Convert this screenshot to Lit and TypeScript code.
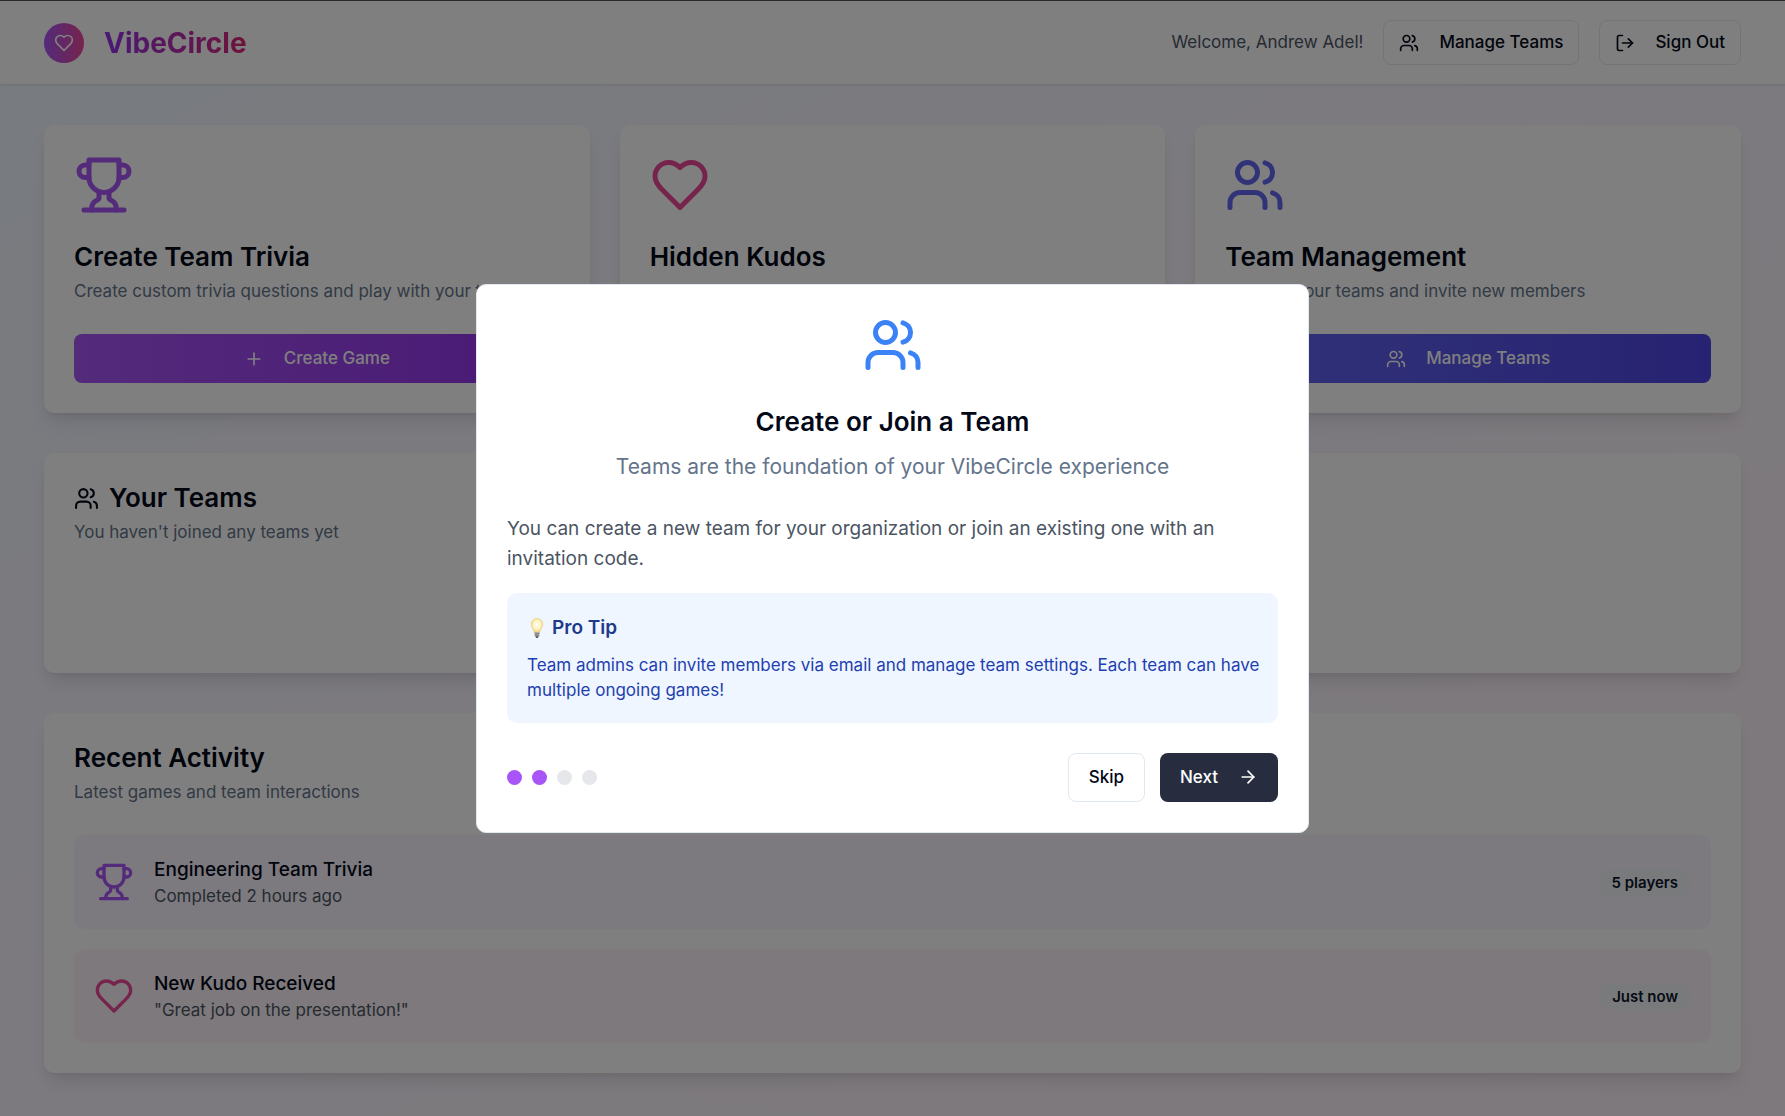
import { LitElement, html, css, svg } from "lit";
import { customElement, property } from "lit/decorators.js";

const glyphs = {
  users: svg`<path d="M16 21v-2a4 4 0 0 0-4-4H6a4 4 0 0 0-4 4v2"/><circle cx="9" cy="7" r="4"/><path d="M22 21v-2a4 4 0 0 0-3-3.87"/><path d="M16 3.13a4 4 0 0 1 0 7.75"/>`,
  heart: svg`<path d="M19 14c1.49-1.46 3-3.21 3-5.5A5.5 5.5 0 0 0 16.5 3c-1.76 0-3 .5-4.5 2-1.5-1.5-2.74-2-4.5-2A5.5 5.5 0 0 0 2 8.5c0 2.3 1.5 4.05 3 5.5l7 7Z"/>`,
  trophy: svg`<path d="M6 9H4.5a2.5 2.5 0 0 1 0-5H6"/><path d="M18 9h1.5a2.5 2.5 0 0 0 0-5H18"/><path d="M4 22h16"/><path d="M10 14.66V17c0 .55-.47.98-.97 1.21C7.85 18.75 7 20.24 7 22"/><path d="M14 14.66V17c0 .55.47.98.97 1.21C16.15 18.75 17 20.24 17 22"/><path d="M18 2H6v7a6 6 0 0 0 12 0V2Z"/>`,
  plus: svg`<path d="M5 12h14"/><path d="M12 5v14"/>`,
  logout: svg`<path d="M9 21H5a2 2 0 0 1-2-2V5a2 2 0 0 1 2-2h4"/><path d="m16 17 5-5-5-5"/><path d="M21 12H9"/>`,
  arrow: svg`<path d="M5 12h14"/><path d="m12 5 7 7-7 7"/>`,
};

type GlyphName = keyof typeof glyphs;

@customElement("line-icon")
class LineIcon extends LitElement {
  @property() name: GlyphName = "users";

  static styles = css`
    :host {
      display: block;
      flex: none;
      width: 20px;
      height: 20px;
    }
    svg {
      display: block;
      width: 100%;
      height: 100%;
      fill: none;
      stroke: currentColor;
      stroke-width: 2;
      stroke-linecap: round;
      stroke-linejoin: round;
    }
  `;

  render() {
    return html`<svg viewBox="0 0 24 24" aria-hidden="true">${glyphs[this.name]}</svg>`;
  }
}

interface Activity {
  icon: GlyphName;
  tone: string;
  title: string;
  detail: string;
  badge: string;
}

const activities: Activity[] = [
  { icon: "trophy", tone: "purple", title: "Engineering Team Trivia", detail: "Completed 2 hours ago", badge: "5 players" },
  { icon: "heart", tone: "pink", title: "New Kudo Received", detail: '"Great job on the presentation!"', badge: "Just now" },
];

@customElement("app-root")
class AppRoot extends LitElement {
  static styles = css`
    :host {
      display: block;
      font-family: Inter, "Liberation Sans", sans-serif;
      font-size: 17px;
      line-height: 25px;
      color: #020817;
    }
    * {
      box-sizing: border-box;
    }
    h1, h2, h3, p, ul {
      margin: 0;
      padding: 0;
    }
    .page {
      min-height: 100vh;
      border-top: 1px solid #52525b;
      background: linear-gradient(to bottom right, #eff6ff, #faf5ff, #fdf2f8);
    }
    .header {
      display: flex;
      align-items: center;
      justify-content: space-between;
      padding: 19px 44px;
      background: #fff;
      border-bottom: 1px solid #e5e7eb;
      box-shadow: 0 1px 2px rgba(0, 0, 0, 0.05);
    }
    .brand, .actions {
      display: flex;
      align-items: center;
      gap: 20px;
    }
    .logo {
      display: grid;
      place-items: center;
      width: 40px;
      height: 40px;
      border-radius: 50%;
      color: #fff;
      background: linear-gradient(to right, #a855f7, #ec4899);
    }
    .wordmark {
      font-size: 28px;
      line-height: 40px;
      font-weight: 700;
      color: transparent;
      background: linear-gradient(to right, #9333ea, #db2777);
      -webkit-background-clip: text;
      background-clip: text;
    }
    .welcome {
      color: #4b5563;
    }
    button {
      display: flex;
      align-items: center;
      justify-content: center;
      gap: 20px;
      height: 49px;
      padding: 0 20px;
      border: 0;
      border-radius: 8px;
      font: inherit;
      font-weight: 500;
      color: #fff;
      cursor: pointer;
    }
    .outline {
      color: #020817;
      background: #fff;
      border: 1px solid #e2e8f0;
    }
    .small {
      height: 45px;
      padding: 0 15px;
    }
    .main {
      display: grid;
      gap: 40px;
      padding: 40px 44px;
    }
    .features {
      display: grid;
      grid-template-columns: repeat(3, 1fr);
      gap: 30px;
    }
    .card {
      display: flex;
      flex-direction: column;
      padding: 30px;
      border-radius: 10px;
      background: #fff;
      box-shadow: 0 12px 19px -4px rgba(0, 0, 0, 0.1), 0 5px 8px -5px rgba(0, 0, 0, 0.1);
    }
    .large {
      width: 60px;
      height: 60px;
      margin-bottom: 27px;
    }
    .title {
      display: flex;
      align-items: center;
      gap: 10px;
      font-size: 26px;
      line-height: 30px;
      font-weight: 600;
    }
    .title line-icon {
      width: 25px;
      height: 25px;
    }
    .desc {
      margin-top: 7px;
      color: #64748b;
    }
    .card button {
      margin-top: 30px;
    }
    .purple { color: #a855f7; }
    .pink { color: #ec4899; }
    .indigo { color: #6366f1; }
    .blue { color: #3b82f6; }
    .fill-purple { background: linear-gradient(to right, #a855f7, #9333ea); }
    .fill-indigo { background: linear-gradient(to right, #6366f1, #4f46e5); }
    .teams {
      min-height: 220px;
    }
    .activity {
      display: grid;
      gap: 20px;
      margin-top: 30px;
      list-style: none;
    }
    .row {
      display: flex;
      align-items: center;
      gap: 20px;
      padding: 20px;
      border-radius: 10px;
    }
    .row.purple { background: #faf5ff; }
    .row.pink { background: #fdf2f8; }
    .row line-icon {
      width: 40px;
      height: 40px;
    }
    .row-text {
      flex: 1;
      color: #4b5563;
    }
    .row-title {
      font-size: 19px;
      line-height: 29px;
      font-weight: 500;
      color: #020817;
    }
    .badge {
      padding: 1px 13px;
      border-radius: 14px;
      font-size: 15px;
      font-weight: 600;
      color: #0f172a;
      background: #f1f5f9;
    }
    .overlay {
      position: fixed;
      inset: 0;
      display: grid;
      place-items: center;
      padding: 20px;
      background: rgba(0, 0, 0, 0.5);
    }
    .dialog {
      display: flex;
      flex-direction: column;
      width: 100%;
      max-width: 833px;
      padding: 30px;
      border: 1px solid #e2e8f0;
      border-radius: 10px;
      background: #fff;
    }
    .dialog-head {
      display: flex;
      flex-direction: column;
      align-items: center;
      text-align: center;
    }
    .dialog-head .title {
      line-height: 40px;
    }
    .subtitle {
      margin-top: 7px;
      font-size: 21px;
      line-height: 35px;
      color: #64748b;
    }
    .copy {
      margin-top: 30px;
      font-size: 19px;
      line-height: 30px;
      color: #4b5563;
    }
    .tip {
      margin-top: 19px;
      padding: 20px 15px 20px 20px;
      border-radius: 10px;
      color: #1e40af;
      background: #eff6ff;
    }
    .tip-title {
      display: flex;
      align-items: center;
      gap: 5px;
      margin-bottom: 10px;
      font-size: 19px;
      line-height: 30px;
      font-weight: 600;
      color: #1e3a8a;
    }
    .bulb {
      width: 20px;
      height: 20px;
    }
    .dialog-foot {
      display: flex;
      align-items: center;
      justify-content: space-between;
      margin-top: 30px;
    }
    .dots {
      display: flex;
      gap: 10px;
    }
    .dot {
      width: 15px;
      height: 15px;
      border-radius: 50%;
      background: #e5e7eb;
    }
    .dot.done {
      background: #a855f7;
    }
    .choices {
      display: flex;
      gap: 15px;
    }
    .next {
      background: #272c3f;
    }
  `;

  private steps = 4;
  private step = 2;

  private renderActivity(item: Activity) {
    return html`
      <li class="row ${item.tone}">
        <line-icon name=${item.icon}></line-icon>
        <div class="row-text">
          <h3 class="row-title">${item.title}</h3>
          <p>${item.detail}</p>
        </div>
        <span class="badge">${item.badge}</span>
      </li>
    `;
  }

  private renderDialog() {
    return html`
      <div class="overlay">
        <section class="dialog" role="dialog" aria-modal="true" aria-labelledby="dialog-title">
          <div class="dialog-head">
            <line-icon class="large blue" name="users"></line-icon>
            <h2 class="title" id="dialog-title">Create or Join a Team</h2>
            <p class="subtitle">Teams are the foundation of your VibeCircle experience</p>
          </div>
          <p class="copy">
            You can create a new team for your organization or join an existing one with an invitation code.
          </p>
          <div class="tip">
            <h3 class="tip-title">
              <svg class="bulb" viewBox="0 0 20 20" aria-hidden="true">
                <defs>
                  <radialGradient id="glow" cx="0.5" cy="0.45" r="0.6">
                    <stop offset="0" stop-color="#fffef2" />
                    <stop offset="0.55" stop-color="#fdf3c0" />
                    <stop offset="1" stop-color="#ecc45c" />
                  </radialGradient>
                </defs>
                <path d="M10 .5C6.5.5 4.200 3 4.200 6.200c0 3.300 2.500 4.600 3 8.300h5.600c.5-3.700 3-5 3-8.300C15.800 3 13.500.5 10 .5Z" fill="url(#glow)" stroke="#e8c873" stroke-width="0.500" />
                <path d="M7.500 14.300h5l-.3 3.700-1.200 1.500H9L7.800 18Z" fill="#a3a3a0" />
                <path d="M7.600 15.700h4.800M7.800 17.300h4.400" stroke="#6b6b69" stroke-width="0.600" />
                <path d="M8.500 18.600h3l-.7 1.200H9.200Z" fill="#333" />
              </svg>
              Pro Tip
            </h3>
            <p>Team admins can invite members via email and manage team settings. Each team can have multiple ongoing games!</p>
          </div>
          <div class="dialog-foot">
            <div class="dots">
              ${Array.from({ length: this.steps }, (_, i) => html`<span class="dot ${i < this.step ? "done" : ""}"></span>`)}
            </div>
            <div class="choices">
              <button class="outline" type="button">Skip</button>
              <button class="next" type="button">Next<line-icon name="arrow"></line-icon></button>
            </div>
          </div>
        </section>
      </div>
    `;
  }

  render() {
    return html`
      <div class="page">
        <header class="header">
          <div class="brand">
            <span class="logo"><line-icon name="heart"></line-icon></span>
            <h1 class="wordmark">VibeCircle</h1>
          </div>
          <div class="actions">
            <span class="welcome">Welcome, Andrew Adel!</span>
            <button class="outline small" type="button"><line-icon name="users"></line-icon>Manage Teams</button>
            <button class="outline small" type="button"><line-icon name="logout"></line-icon>Sign Out</button>
          </div>
        </header>
        <main class="main">
          <div class="features">
            <section class="card">
              <line-icon class="large purple" name="trophy"></line-icon>
              <h2 class="title">Create Team Trivia</h2>
              <p class="desc">Create custom trivia questions and play with your team</p>
              <button class="fill-purple" type="button"><line-icon name="plus"></line-icon>Create Game</button>
            </section>
            <section class="card">
              <line-icon class="large pink" name="heart"></line-icon>
              <h2 class="title">Hidden Kudos</h2>
            </section>
            <section class="card">
              <line-icon class="large indigo" name="users"></line-icon>
              <h2 class="title">Team Management</h2>
              <p class="desc">Manage your teams and invite new members</p>
              <button class="fill-indigo" type="button"><line-icon name="users"></line-icon>Manage Teams</button>
            </section>
          </div>
          <section class="card teams">
            <h2 class="title"><line-icon name="users"></line-icon>Your Teams</h2>
            <p class="desc">You haven't joined any teams yet</p>
          </section>
          <section class="card">
            <h2 class="title">Recent Activity</h2>
            <p class="desc">Latest games and team interactions</p>
            <ul class="activity">
              ${activities.map((item) => this.renderActivity(item))}
            </ul>
          </section>
        </main>
      </div>
      ${this.renderDialog()}
    `;
  }
}
